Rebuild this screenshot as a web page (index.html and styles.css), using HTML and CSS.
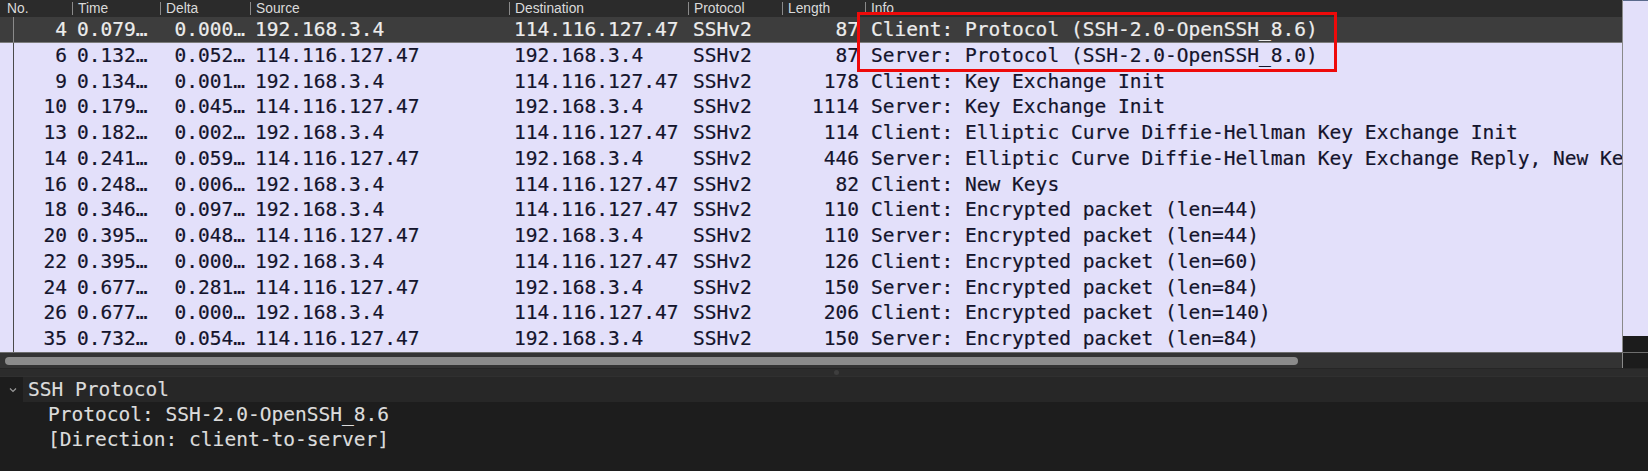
FILE: index.html
```html
<!DOCTYPE html>
<html>
<head>
<meta charset="utf-8">
<link rel="stylesheet" href="styles.css">
</head>
<body>
<div class="app">
  <div class="top">
    <div class="list">
      <div class="row head">
        <div class="c no">No.</div>
        <div class="c">Time</div>
        <div class="c">Delta</div>
        <div class="c">Source</div>
        <div class="c">Destination</div>
        <div class="c">Protocol</div>
        <div class="c">Length</div>
        <div class="c">Info</div>
      </div>
      <div class="row pkt sel"><div class="c r">4</div><div class="c">0.079…</div><div class="c r">0.000…</div><div class="c">192.168.3.4</div><div class="c">114.116.127.47</div><div class="c">SSHv2</div><div class="c r">87</div><div class="c">Client: Protocol (SSH-2.0-OpenSSH_8.6)</div></div>
      <div class="row pkt"><div class="c r">6</div><div class="c">0.132…</div><div class="c r">0.052…</div><div class="c">114.116.127.47</div><div class="c">192.168.3.4</div><div class="c">SSHv2</div><div class="c r">87</div><div class="c">Server: Protocol (SSH-2.0-OpenSSH_8.0)</div></div>
      <div class="row pkt"><div class="c r">9</div><div class="c">0.134…</div><div class="c r">0.001…</div><div class="c">192.168.3.4</div><div class="c">114.116.127.47</div><div class="c">SSHv2</div><div class="c r">178</div><div class="c">Client: Key Exchange Init</div></div>
      <div class="row pkt"><div class="c r">10</div><div class="c">0.179…</div><div class="c r">0.045…</div><div class="c">114.116.127.47</div><div class="c">192.168.3.4</div><div class="c">SSHv2</div><div class="c r">1114</div><div class="c">Server: Key Exchange Init</div></div>
      <div class="row pkt"><div class="c r">13</div><div class="c">0.182…</div><div class="c r">0.002…</div><div class="c">192.168.3.4</div><div class="c">114.116.127.47</div><div class="c">SSHv2</div><div class="c r">114</div><div class="c">Client: Elliptic Curve Diffie-Hellman Key Exchange Init</div></div>
      <div class="row pkt"><div class="c r">14</div><div class="c">0.241…</div><div class="c r">0.059…</div><div class="c">114.116.127.47</div><div class="c">192.168.3.4</div><div class="c">SSHv2</div><div class="c r">446</div><div class="c">Server: Elliptic Curve Diffie-Hellman Key Exchange Reply, New Keys</div></div>
      <div class="row pkt"><div class="c r">16</div><div class="c">0.248…</div><div class="c r">0.006…</div><div class="c">192.168.3.4</div><div class="c">114.116.127.47</div><div class="c">SSHv2</div><div class="c r">82</div><div class="c">Client: New Keys</div></div>
      <div class="row pkt"><div class="c r">18</div><div class="c">0.346…</div><div class="c r">0.097…</div><div class="c">192.168.3.4</div><div class="c">114.116.127.47</div><div class="c">SSHv2</div><div class="c r">110</div><div class="c">Client: Encrypted packet (len=44)</div></div>
      <div class="row pkt"><div class="c r">20</div><div class="c">0.395…</div><div class="c r">0.048…</div><div class="c">114.116.127.47</div><div class="c">192.168.3.4</div><div class="c">SSHv2</div><div class="c r">110</div><div class="c">Server: Encrypted packet (len=44)</div></div>
      <div class="row pkt"><div class="c r">22</div><div class="c">0.395…</div><div class="c r">0.000…</div><div class="c">192.168.3.4</div><div class="c">114.116.127.47</div><div class="c">SSHv2</div><div class="c r">126</div><div class="c">Client: Encrypted packet (len=60)</div></div>
      <div class="row pkt"><div class="c r">24</div><div class="c">0.677…</div><div class="c r">0.281…</div><div class="c">114.116.127.47</div><div class="c">192.168.3.4</div><div class="c">SSHv2</div><div class="c r">150</div><div class="c">Server: Encrypted packet (len=84)</div></div>
      <div class="row pkt"><div class="c r">26</div><div class="c">0.677…</div><div class="c r">0.000…</div><div class="c">192.168.3.4</div><div class="c">114.116.127.47</div><div class="c">SSHv2</div><div class="c r">206</div><div class="c">Client: Encrypted packet (len=140)</div></div>
      <div class="row pkt"><div class="c r">35</div><div class="c">0.732…</div><div class="c r">0.054…</div><div class="c">114.116.127.47</div><div class="c">192.168.3.4</div><div class="c">SSHv2</div><div class="c r">150</div><div class="c">Server: Encrypted packet (len=84)</div></div>
      <div class="highlight"></div>
    </div>
    <div class="vscroll">
      <div class="vtrack"></div>
      <div class="vcorner"></div>
    </div>
  </div>
  <div class="hbar">
    <div class="htrack"><div class="thumb"></div></div>
    <div class="hcorner"></div>
  </div>
  <div class="splitter"><span class="dot"></span></div>
  <div class="detail">
    <div class="dline top-line">
      <svg class="chev" width="8" height="6" viewBox="0 0 8 6"><path d="M1 1.5 L4 4.5 L7 1.5" fill="none" stroke="#9a9a9a" stroke-width="1.2"/></svg>
      <span class="dtitle">SSH Protocol</span>
    </div>
    <div class="dline sub">Protocol: SSH-2.0-OpenSSH_8.6</div>
    <div class="dline sub">[Direction: client-to-server]</div>
  </div>
</div>
</body>
</html>
```

FILE: styles.css
```css
* { box-sizing: border-box; }
html, body { margin: 0; padding: 0; background: #1d1d1d; }
body { width: 1648px; height: 471px; overflow: hidden; }

.app { display: flex; flex-direction: column; height: 471px; }

.top { display: grid; grid-template-columns: 1622px 26px; height: 352px; }

.list { position: relative; overflow: hidden; background: #e3e0fa; }

.row {
  display: grid;
  grid-template-columns: 72px 88px 90px 259px 179px 94px 83px 1fr;
  white-space: nowrap;
}

.head {
  height: 17px;
  background: #2b2b2b;
  color: #dadada;
  font-family: "Liberation Sans", Arial, sans-serif;
  font-size: 13.8px;
  line-height: 17px;
}
.head .c { padding-left: 5px; border-left: 1px solid #6a6a6a; }
.head .c { border-image: linear-gradient(to bottom, transparent 3px, #8a8a8a 3px, #8a8a8a 14px, transparent 14px) 1; }
.head .c.no { border-left: none; border-image: none; padding-left: 7px; }

.pkt {
  height: 25.77px;
  line-height: 25.77px;
  font-family: "DejaVu Sans Mono", "Liberation Mono", monospace;
  font-size: 19.55px;
  color: #14142c;
  -webkit-text-stroke: 0.2px #14142c;
  background-image: linear-gradient(to right, transparent 13px, #4a4a4a 13px, #4a4a4a 14px, transparent 14px);
}
.pkt .c { overflow: hidden; padding-left: 5px; }
.pkt .c.r { text-align: right; padding-left: 0; padding-right: 5px; }
.pkt .c:nth-child(7) { padding-right: 6px; }
.pkt .c:nth-child(8) { padding-left: 6px; }

.sel {
  background-color: #3d3d3d;
  color: #ececec;
  -webkit-text-stroke: 0.2px #ececec;
  border-bottom: 1px solid #7c7c7c;
  background-image: linear-gradient(to right, transparent 13px, #8a8a8a 13px, #8a8a8a 14px, transparent 14px);
}

.highlight {
  position: absolute;
  left: 857px;
  top: 12px;
  width: 480px;
  height: 60px;
  border: 3.5px solid #ee0a0a;
}

.vscroll { display: flex; flex-direction: column; border-left: 1px solid #8a8a8a; background: #1c1c1c; }
.vtrack { height: 336px; background: #e3e0fa; border-top: 1px solid #5a6a8c; }
.vcorner { flex: 1; background: #1c1c1c; }

.hbar { display: grid; grid-template-columns: 1622px 26px; height: 16px; border-top: 1px solid #6e6e6e; }
.htrack { background: #333333; padding: 4px 0 0 5px; }
.thumb { width: 1293px; height: 8px; border-radius: 4px; background: #8b8b8b; }
.hcorner { background: #1c1c1c; border-left: 1px solid #8a8a8a; }

.splitter {
  height: 8px;
  background: #2c2c2c;
  border-top: 1px solid #262626;
  display: flex;
  justify-content: flex-start;
  align-items: center;
  padding-left: 834px;
}
.dot { width: 5px; height: 5px; border-radius: 50%; background: #3e3e3e; }

.detail {
  flex: 1;
  background: #1d1d1d;
  border-top: 1px solid #303030;
  font-family: "DejaVu Sans Mono", "Liberation Mono", monospace;
  font-size: 19.55px;
  color: #dcdcdc;
  -webkit-text-stroke: 0.15px #dcdcdc;
}
.dline { height: 25px; line-height: 25px; white-space: nowrap; }
.top-line { display: flex; align-items: center; }
.chev { margin-left: 9px; margin-right: 6px; flex: none; }
.dtitle { background: #272727; padding-left: 5px; width: 1625px; }
.sub { padding-left: 48px; }
```
